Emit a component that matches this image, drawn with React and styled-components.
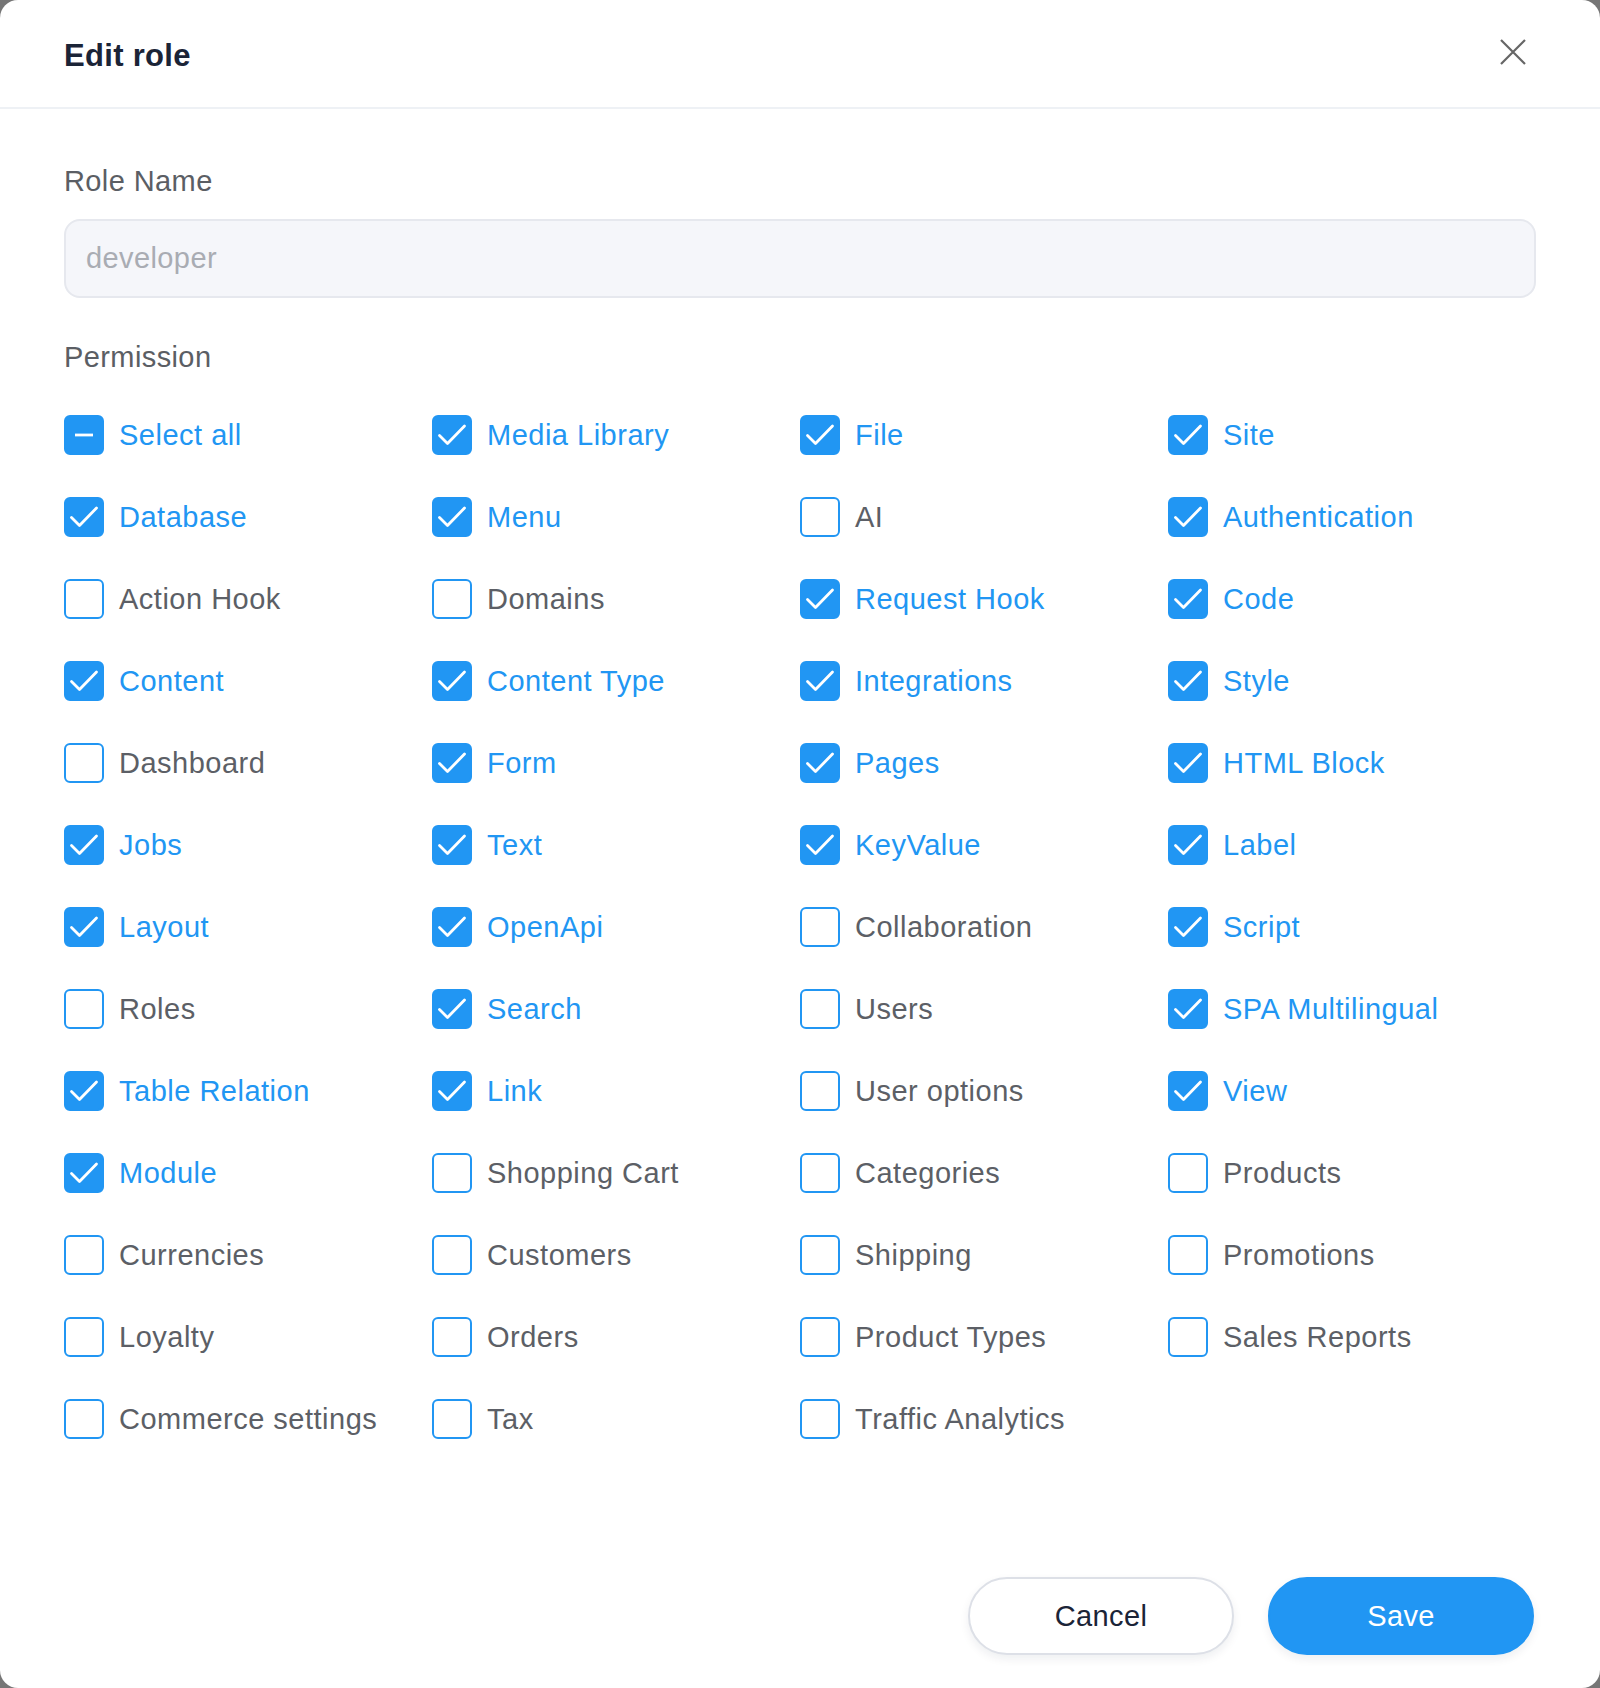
import styled, { createGlobalStyle } from "styled-components";

const GlobalStyle = createGlobalStyle`
  html, body {
    margin: 0;
    padding: 0;
    background: #767676;
  }
  * {
    box-sizing: border-box;
  }
`;

const BLUE = "#2196f3";

const permissions = [
  ["Select all", "mixed"],
  ["Media Library", true],
  ["File", true],
  ["Site", true],
  ["Database", true],
  ["Menu", true],
  ["AI", false],
  ["Authentication", true],
  ["Action Hook", false],
  ["Domains", false],
  ["Request Hook", true],
  ["Code", true],
  ["Content", true],
  ["Content Type", true],
  ["Integrations", true],
  ["Style", true],
  ["Dashboard", false],
  ["Form", true],
  ["Pages", true],
  ["HTML Block", true],
  ["Jobs", true],
  ["Text", true],
  ["KeyValue", true],
  ["Label", true],
  ["Layout", true],
  ["OpenApi", true],
  ["Collaboration", false],
  ["Script", true],
  ["Roles", false],
  ["Search", true],
  ["Users", false],
  ["SPA Multilingual", true],
  ["Table Relation", true],
  ["Link", true],
  ["User options", false],
  ["View", true],
  ["Module", true],
  ["Shopping Cart", false],
  ["Categories", false],
  ["Products", false],
  ["Currencies", false],
  ["Customers", false],
  ["Shipping", false],
  ["Promotions", false],
  ["Loyalty", false],
  ["Orders", false],
  ["Product Types", false],
  ["Sales Reports", false],
  ["Commerce settings", false],
  ["Tax", false],
  ["Traffic Analytics", false],
];

const Modal = styled.div`
  display: flex;
  flex-direction: column;
  height: 1688px;
  background: #fff;
  border-radius: 18px;
  font-family: "Liberation Sans", Arial, sans-serif;
  overflow: hidden;
`;

const Header = styled.header`
  display: flex;
  align-items: center;
  justify-content: space-between;
  height: 109px;
  padding: 0 74px 4px 64px;
  border-bottom: 2px solid #eef1f5;
`;

const Title = styled.h2`
  margin: 8px 0 0;
  font-size: 31px;
  font-weight: 700;
  color: #1b2437;
  letter-spacing: 0.3px;
`;

const CloseButton = styled.button`
  display: flex;
  padding: 0;
  border: none;
  background: none;
  cursor: pointer;
  color: #666;
`;

const Body = styled.div`
  padding: 52px 64px 0;
`;

const FieldLabel = styled.div`
  font-size: 29px;
  line-height: 40px;
  letter-spacing: 0.4px;
  color: #5b5e64;
`;

const Input = styled.input`
  display: block;
  width: 100%;
  height: 79px;
  margin: 18px 0 39px;
  padding: 0 20px;
  border: 2px solid #e6e8ee;
  border-radius: 16px;
  background: #f5f6fa;
  font-family: inherit;
  font-size: 29px;
  letter-spacing: 0.4px;
  color: #333;
  outline: none;

  &::placeholder {
    color: #a9acb3;
  }
`;

const Grid = styled.div`
  display: grid;
  grid-template-columns: repeat(4, 1fr);
  row-gap: 42px;
  margin-top: 38px;
`;

const Option = styled.label`
  display: flex;
  align-items: center;
  gap: 15px;
  height: 40px;
  font-size: 29px;
  letter-spacing: 0.5px;
  color: ${(p) => (p.$on ? BLUE : "#5c5f66")};
  cursor: pointer;
  white-space: nowrap;
`;

const Box = styled.span`
  display: flex;
  flex: none;
  width: 40px;
  height: 40px;
  border-radius: 6px;
  border: 2px solid ${BLUE};
  background: ${(p) => (p.$on ? BLUE : "#fff")};
`;

const Footer = styled.footer`
  display: flex;
  justify-content: flex-end;
  gap: 34px;
  margin-top: auto;
  padding: 0 66px 33px;
`;

const Button = styled.button`
  width: 266px;
  height: 78px;
  border-radius: 39px;
  font-family: inherit;
  font-size: 29px;
  letter-spacing: 0.4px;
  cursor: pointer;
  border: 2px solid ${(p) => (p.$primary ? BLUE : "#dde0e7")};
  background: ${(p) => (p.$primary ? BLUE : "#fff")};
  color: ${(p) => (p.$primary ? "#fff" : "#1b2437")};
  box-shadow: 0 4px 10px rgba(20, 30, 60, 0.07);
`;

const Check = ({ state }) => (
  <Box $on={state !== false}>
    {state === true && (
      <svg width="36" height="36" viewBox="2 2 36 36" fill="none">
        <polyline
          points="7.5,20.5 15.5,28.5 32.5,11"
          stroke="#fff"
          strokeWidth="2.8"
          strokeLinecap="round"
          strokeLinejoin="round"
        />
      </svg>
    )}
    {state === "mixed" && (
      <svg width="36" height="36" viewBox="2 2 36 36" fill="none">
        <line x1="11" y1="20" x2="29" y2="20" stroke="#fff" strokeWidth="2.8" />
      </svg>
    )}
  </Box>
);

export default function App() {
  return (
    <>
      <GlobalStyle />
      <Modal>
        <Header>
          <Title>Edit role</Title>
          <CloseButton aria-label="Close">
            <svg width="26" height="26" viewBox="0 0 26 26">
              <path d="M1 1L25 25M25 1L1 25" stroke="currentColor" strokeWidth="2.2" />
            </svg>
          </CloseButton>
        </Header>

        <Body>
          <FieldLabel>Role Name</FieldLabel>
          <Input placeholder="developer" />

          <FieldLabel>Permission</FieldLabel>
          <Grid>
            {permissions.map(([name, state]) => (
              <Option key={name} $on={state !== false}>
                <Check state={state} />
                {name}
              </Option>
            ))}
          </Grid>
        </Body>

        <Footer>
          <Button>Cancel</Button>
          <Button $primary>Save</Button>
        </Footer>
      </Modal>
    </>
  );
}
